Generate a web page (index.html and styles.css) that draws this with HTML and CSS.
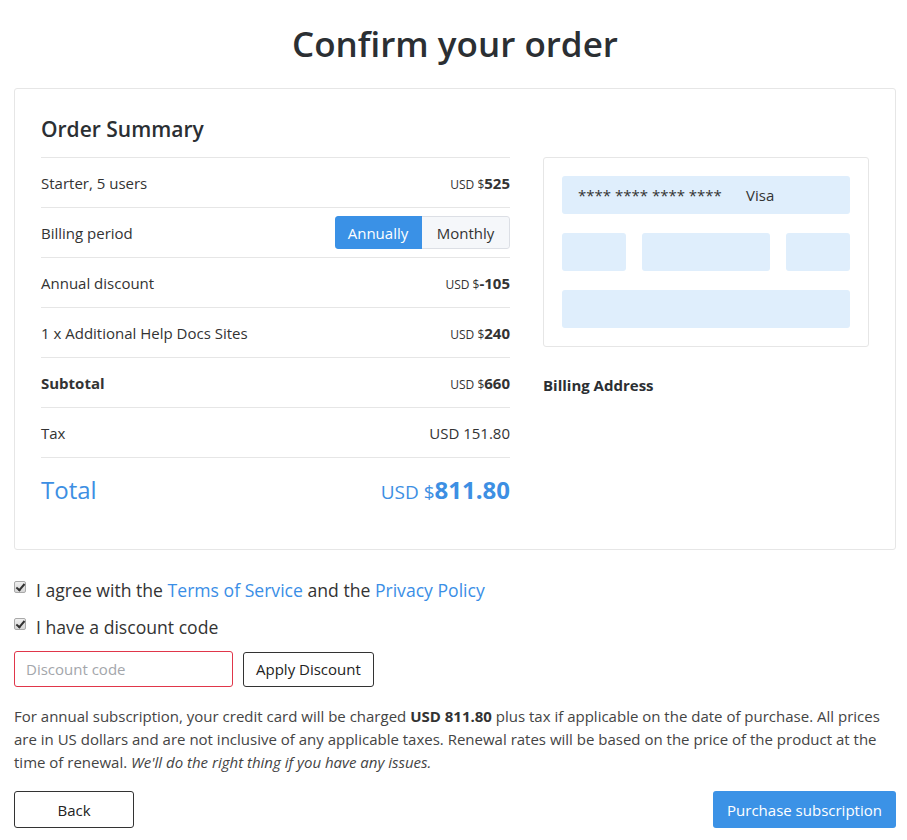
FILE: index.html
```html
<!DOCTYPE html>
<html>
<head>
<meta charset="utf-8">
<link rel="stylesheet" href="styles.css">
</head>
<body>
<div class="page">
  <h1 class="title">Confirm your order</h1>
  <div class="card">
    <div class="summary">
      <h2 class="summary-title">Order Summary</h2>
      <div class="rows">
        <div class="row"><span>Starter, 5 users</span><span class="price"><small>USD $</small><b>525</b></span></div>
        <div class="row"><span>Billing period</span>
          <div class="toggle"><span class="opt active">Annually</span><span class="opt">Monthly</span></div>
        </div>
        <div class="row"><span>Annual discount</span><span class="price"><small>USD $</small><b>-105</b></span></div>
        <div class="row"><span>1 x Additional Help Docs Sites</span><span class="price"><small>USD $</small><b>240</b></span></div>
        <div class="row"><b>Subtotal</b><span class="price"><small>USD $</small><b>660</b></span></div>
        <div class="row"><span>Tax</span><span>USD 151.80</span></div>
        <div class="row total"><span>Total</span><span class="price"><small>USD $</small><b>811.80</b></span></div>
      </div>
    </div>
    <div class="payment">
      <div class="cc-box">
        <div class="field full"><span class="mask">**** **** **** ****</span><span class="brand">Visa</span></div>
        <div class="field-row">
          <div class="field small"></div>
          <div class="field mid"></div>
          <div class="field small"></div>
        </div>
        <div class="field full"></div>
      </div>
      <div class="billing">Billing Address</div>
    </div>
  </div>

  <label class="check first"><input type="checkbox" checked> <span>I agree with the <a href="#">Terms of Service</a> and the <a href="#">Privacy Policy</a></span></label>
  <label class="check"><input type="checkbox" checked> <span>I have a discount code</span></label>

  <div class="discount">
    <input class="discount-input" type="text" placeholder="Discount code">
    <button class="btn-outline">Apply Discount</button>
  </div>

  <p class="note">For annual subscription, your credit card will be charged <b>USD 811.80</b> plus tax if applicable on the date of purchase. All prices are in US dollars and are not inclusive of any applicable taxes. Renewal rates will be based on the price of the product at the time of renewal. <i>We'll do the right thing if you have any issues.</i></p>

  <div class="actions">
    <button class="btn-outline back">Back</button>
    <button class="btn-primary">Purchase subscription</button>
  </div>
</div>
</body>
</html>
```

FILE: styles.css
```css
* { box-sizing: border-box; }
body {
  margin: 0;
  font-family: "Open Sans", "Liberation Sans", sans-serif;
  color: #333;
  background: #fff;
}
.page {
  width: 882px;
  margin-left: 14px;
}
.title {
  margin: 20px 0 20px;
  text-align: center;
  font-size: 35px;
  font-weight: 600;
  line-height: 48px;
  color: #2b2f33;
}
.card {
  border: 1px solid #e6e6e6;
  border-radius: 3px;
  padding: 20px 26px 27px 26px;
  display: flex;
  gap: 33px;
}
.summary { width: 469px; flex: none; }
.payment { flex: 1; min-width: 0; padding-top: 48px; }
.summary-title {
  margin: 0 0 8px;
  font-size: 21px;
  font-weight: 600;
  line-height: 40px;
  color: #2b2f33;
}
.rows { border-top: 1px solid #e6e6e6; }
.row {
  display: flex;
  justify-content: space-between;
  align-items: center;
  height: 50px;
  border-bottom: 1px solid #e6e6e6;
  font-size: 15px;
}
.row b { font-weight: 700; }
.price small { font-size: 12px; }
.row.total {
  border-bottom: none;
  height: 64px;
  color: #3d8fe3;
  font-size: 24px;
  padding-bottom: 1px;
}
.row.total .price small { font-size: 19px; }
.row.total .price b { font-size: 24px; }
.toggle {
  display: flex;
  height: 33px;
  border-radius: 3px;
  overflow: hidden;
  font-size: 15px;
}
.opt {
  display: flex;
  align-items: center;
  justify-content: center;
  width: 88px;
  border: 1px solid #dcdfe5;
  background: #f5f7fa;
  color: #333;
  border-left: none;
  border-radius: 0 3px 3px 0;
}
.opt.active {
  width: 87px;
  background: #3a91e6;
  border-color: #3a91e6;
  color: #fff;
  border-radius: 3px 0 0 3px;
}
.cc-box {
  border: 1px solid #e6e6e6;
  border-radius: 3px;
  padding: 18px;
  display: flex;
  flex-direction: column;
  gap: 19px;
}
.field {
  background: #dfeefc;
  border-radius: 3px;
  height: 38px;
}
.field.full {
  display: flex;
  align-items: center;
  padding-left: 16px;
  font-size: 15px;
  color: #333;
}
.mask { width: 168px; }
.field-row { display: flex; gap: 16px; }
.field.small { width: 64px; }
.field.mid { width: 128px; }
.billing {
  margin-top: 28px;
  font-size: 15px;
  font-weight: 700;
  color: #2b2f33;
}
.check {
  display: flex;
  align-items: center;
  font-size: 17.6px;
  color: #333;
  height: 24px;
}
.check.first { margin-top: 28px; }
.check + .check { margin-top: 13px; }
.check input {
  -webkit-appearance: none;
  appearance: none;
  margin: 0 10px 0 0;
  width: 12px;
  height: 12px;
  border: 1px solid #a9a9a9;
  border-radius: 2px;
  background: linear-gradient(#f0f0f0, #d6d6d6);
  position: relative;
  top: -3px;
  flex: none;
}
.check input:checked::after {
  content: "";
  position: absolute;
  left: 3px;
  top: 0px;
  width: 3px;
  height: 7px;
  border: solid #333;
  border-width: 0 2px 2px 0;
  transform: rotate(40deg);
}
.check a { color: #3a8ee6; text-decoration: none; }
.discount {
  display: flex;
  gap: 10px;
  margin-top: 12px;
  align-items: center;
}
.discount-input {
  width: 219px;
  height: 36px;
  border: 1px solid #e0364a;
  border-radius: 3px;
  padding: 0 11px;
  font-family: inherit;
  font-size: 15px;
  color: #333;
}
.discount-input::placeholder { color: #a3a6ab; }
.btn-outline {
  height: 35px;
  padding: 0 12px;
  border: 1px solid #333;
  border-radius: 3px;
  background: #fff;
  font-family: inherit;
  font-size: 15px;
  color: #222;
}
.note {
  margin: 18px 0 0;
  font-size: 15px;
  line-height: 23px;
  color: #444;
}
.note b { color: #333; }
.actions {
  display: flex;
  justify-content: space-between;
  margin-top: 17px;
}
.back { width: 120px; height: 37px; }
.btn-primary {
  height: 37px;
  width: 183px;
  border: none;
  border-radius: 3px;
  background: #3b92e6;
  color: #fff;
  font-family: inherit;
  font-size: 15px;
}
```
